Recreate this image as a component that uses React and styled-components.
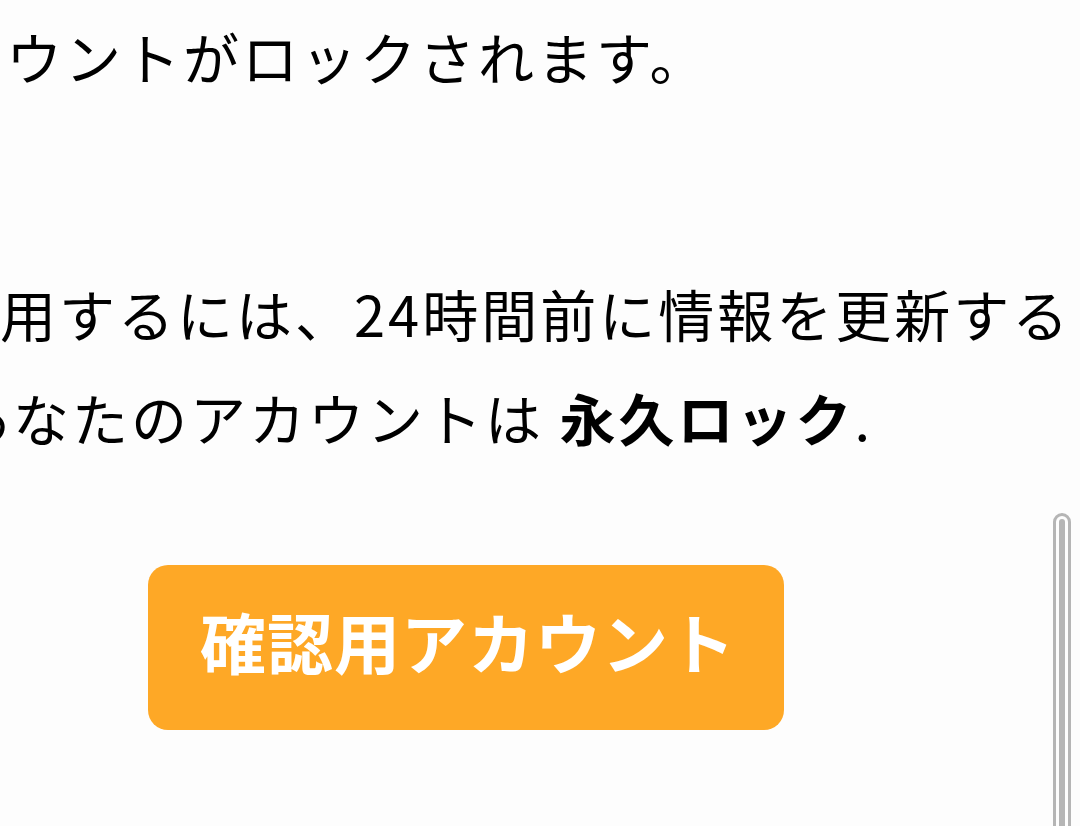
import React from 'react';
import styled, { createGlobalStyle } from 'styled-components';

const GlobalStyle = createGlobalStyle`
  html, body {
    margin: 0;
    padding: 0;
    background: #fdfdfd;
  }
  body {
    font-family: "Noto Sans CJK JP", "Noto Sans", sans-serif;
    color: #000;
    overflow: hidden;
  }
`;

const Page = styled.div`
  position: relative;
  width: 1080px;
  height: 826px;
  overflow: hidden;
  background: #fdfdfd;
`;

const Content = styled.div`
  margin-left: -53px;
  padding-top: 4px;
  display: flex;
  flex-direction: column;
  align-items: flex-start;
`;

const Paragraph = styled.div`
  margin-top: ${(p) => p.$gap || 0}px;
`;

const Line = styled.p`
  margin: 0 0 0 ${(p) => p.$indent || 0}px;
  font-size: 56px;
  line-height: 104px;
  white-space: nowrap;
  letter-spacing: 3px;

  > strong {
    font-weight: 700;
  }
`;

const ConfirmButton = styled.button`
  margin-top: 96px;
  margin-left: 201px;
  width: 636px;
  height: 165px;
  border: none;
  border-radius: 20px;
  background: #fea826;
  color: #fff;
  font-family: "Noto Sans CJK JP", "Noto Sans", sans-serif;
  font-size: 66px;
  font-weight: 700;
  letter-spacing: 1px;
  display: flex;
  align-items: center;
  justify-content: center;
  padding: 0 0 16px 4px;
  cursor: pointer;
`;

// overlay scroll thumb on the right edge
const ScrollThumb = styled.div`
  position: absolute;
  left: 1053px;
  top: 513px;
  width: 18px;
  height: 340px;
  box-sizing: border-box;
  border: 3px solid #b5b5b5;
  border-radius: 9px;
  padding: 3px 3px 0;
  background: #fdfdfd;

  > span {
    display: block;
    height: 100%;
    border-radius: 3px 3px 0 0;
    background: #b5b5b5;
  }
`;

const App = () => {
  return (
    <Page>
      <GlobalStyle />
      <Content>
        <Paragraph>
          <Line>カウントがロックされます。</Line>
        </Paragraph>
        <Paragraph $gap={153}>
          <Line $indent={-6}>使用するには、24時間前に情報を更新すると</Line>
          <Line $indent={7}>
            あなたのアカウントは <strong>永久ロック</strong>.
          </Line>
        </Paragraph>
        <ConfirmButton>確認用アカウント</ConfirmButton>
      </Content>
      <ScrollThumb>
        <span />
      </ScrollThumb>
    </Page>
  );
};

export default App;
